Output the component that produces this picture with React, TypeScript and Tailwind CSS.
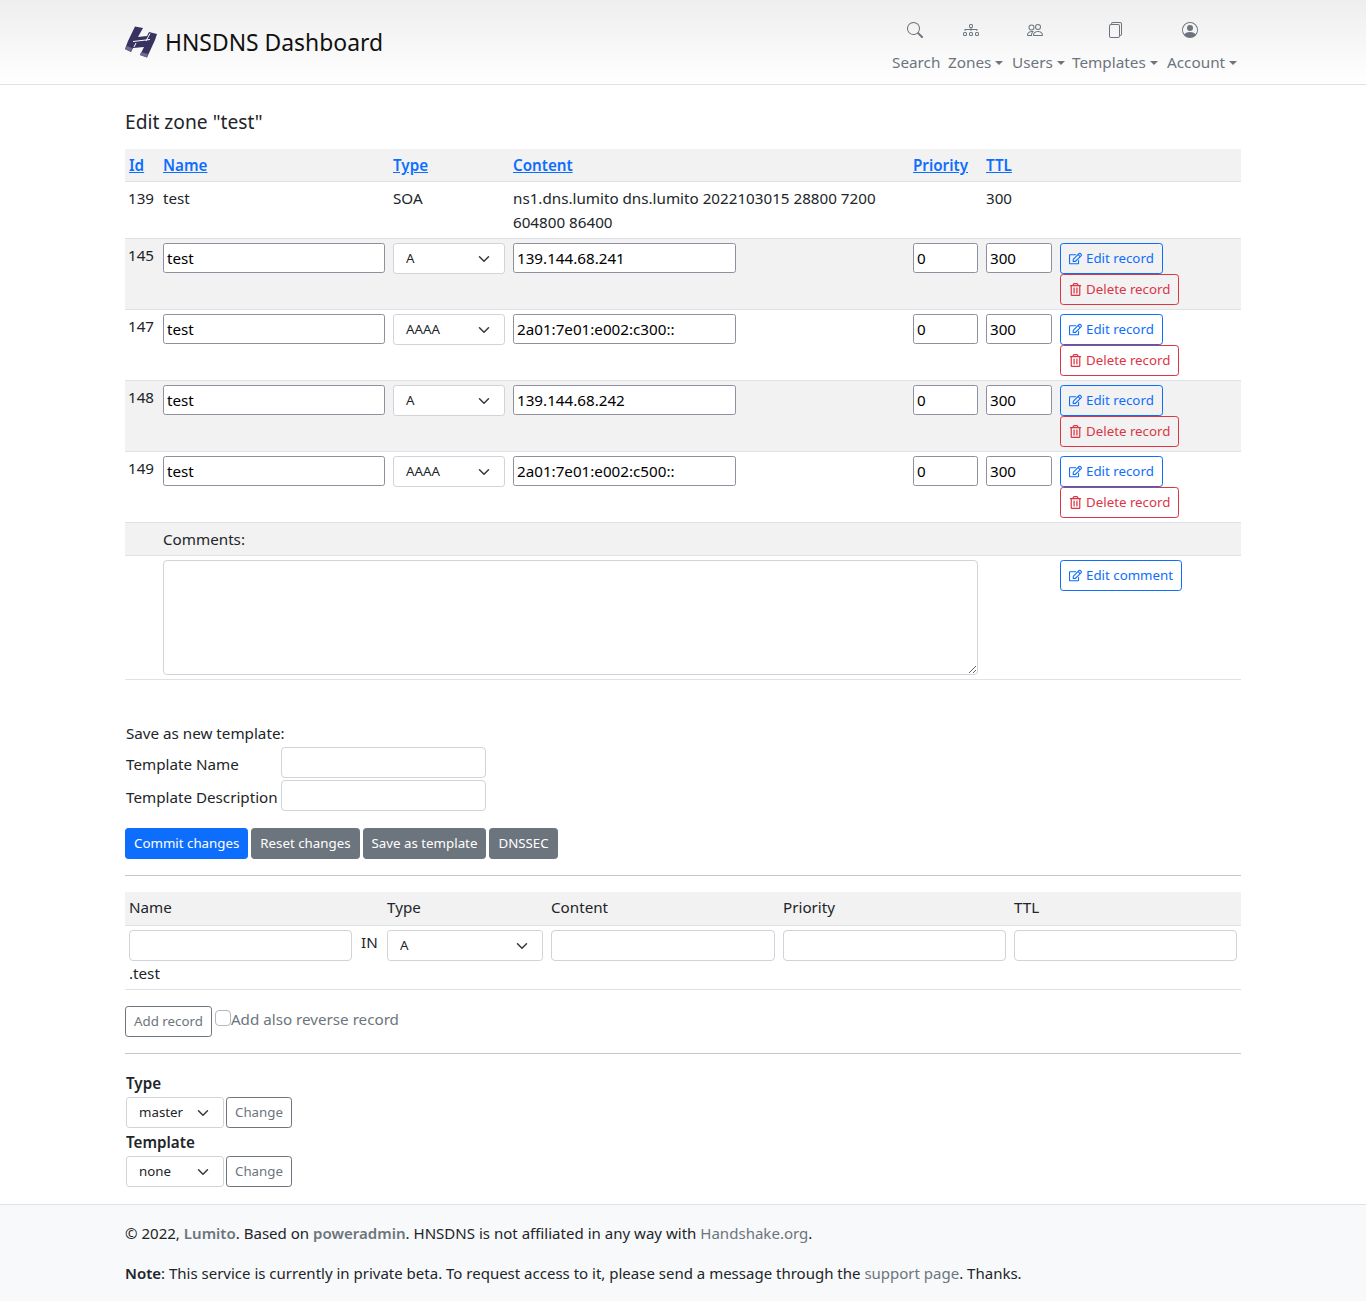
import React from "react";
import { BsSearch, BsDiagram3, BsPeople, BsFiles, BsPersonCircle } from "react-icons/bs";
import { FaRegEdit, FaRegTrashAlt } from "react-icons/fa";

function Logo() {
  return (
    <svg width="33" height="32" viewBox="0 0 33 32" className="shrink-0">
      <path d="M10 0.5 L18 2 L13 11 L22 10 L24 6 L32 8 L30 14 L22 31.5 L15 29 L19 21 L8 22 L6 26 L0 23 L3 15 Z" fill="#37325f" />
      <path d="M8 15.5 L25 13.5 M25 7.5 L21 15 M11 17 L9 21" stroke="#ffffff" strokeWidth="1" fill="none" />
      <path d="M0 23 L6 26 L7 22 L2 20 Z" fill="#6f6b8f" />
      <path d="M15 29 L22 31.5 L23 28 L16 26 Z" fill="#6f6b8f" />
    </svg>
  );
}

function Caret() {
  return <span className="ml-[4px] inline-block align-[3px] border-t-[4.8px] border-x-[4.8px] border-b-0 border-t-[#6c757d] border-x-transparent" />;
}

function NavItem({ icon, label, caret, w, iconClass }: { icon: React.ReactNode; label: string; caret?: boolean; w: string; iconClass: string }) {
  return (
    <div className={"flex flex-col items-start " + w}>
      <div className={"h-[16px] flex items-center text-[#6c757d] " + iconClass}>{icon}</div>
      <div className="mt-[12px] text-[#6c757d] text-[15.3px] leading-6 whitespace-nowrap">
        {label}
        {caret && <Caret />}
      </div>
    </div>
  );
}

function Select({ value, options, w }: { value: string; options: string[]; w: string }) {
  return (
    <div className={"relative " + w}>
      <select
        defaultValue={value}
        className="appearance-none block w-full h-[31px] pl-[12px] pr-[36px] text-[13.3px] leading-[21px] text-[#212529] bg-white border border-[#ced4da] rounded-[3.2px]"
      >
        {options.map((o) => (
          <option key={o}>{o}</option>
        ))}
      </select>
      <svg width="16" height="12" viewBox="0 0 16 16" className="absolute right-[13px] top-[10px] pointer-events-none">
        <path d="M2 5l6 6 6-6" fill="none" stroke="#343a40" strokeWidth="2" strokeLinecap="round" strokeLinejoin="round" />
      </svg>
    </div>
  );
}

function TextInput({ value, w }: { value: string; w: string }) {
  return (
    <input
      defaultValue={value}
      className={"block h-[30px] px-[3px] text-[15.2px] text-black bg-white border border-[#8f8f9d] rounded-[2.5px] " + w}
    />
  );
}

function Btn({ kind, icon, children }: { kind: "edit" | "del" | "grey" | "solid" | "outline"; icon?: React.ReactNode; children: React.ReactNode }) {
  const c = {
    edit: "text-[#0d6efd] border-[#0d6efd]",
    del: "text-[#dc3545] border-[#dc3545]",
    grey: "text-white bg-[#6c757d] border-[#6c757d]",
    solid: "text-white bg-[#0d6efd] border-[#0d6efd]",
    outline: "text-[#6c757d] border-[#6c757d]",
  }[kind];
  return (
    <button className={"flex items-center h-[31px] px-[8px] text-[13.3px] leading-[21px] border rounded-[3.2px] whitespace-nowrap " + c}>
      {icon && <span className="mr-[4px] flex items-center">{icon}</span>}
      {children}
    </button>
  );
}

const records = [
  { id: "145", type: "A", content: "139.144.68.241", alt: true },
  { id: "147", type: "AAAA", content: "2a01:7e01:e002:c300::", alt: false },
  { id: "148", type: "A", content: "139.144.68.242", alt: true },
  { id: "149", type: "AAAA", content: "2a01:7e01:e002:c500::", alt: false },
];

const typeOptions = ["A", "AAAA", "CNAME", "MX", "NS", "SOA", "TXT"];

function Th({ children }: { children: React.ReactNode }) {
  return (
    <th className="p-[4px] h-[32px] text-left font-semibold">
      <a className="text-[#0d6efd] underline">{children}</a>
    </th>
  );
}

export default function App() {
  return (
    <div className="bg-white text-[#212529] text-[15.2px] leading-6 font-['Noto_Sans','Liberation_Sans',sans-serif]">
      <header className="h-[85px] border-b border-[#dee2e6] bg-gradient-to-b from-[#eeeeee] to-[#ffffff]">
        <div className="w-[1116px] mx-auto flex justify-between h-full">
          <div className="flex items-center gap-[7px]">
            <Logo />
            <span className="text-[22.9px] leading-9 pt-[2px] text-[#111] whitespace-nowrap">HNSDNS Dashboard</span>
          </div>
          <nav className="flex pt-[22px] pr-[4px] gap-[8px]">
            <NavItem w="w-[48px]" iconClass="ml-[15px]" icon={<BsSearch size={16} />} label="Search" />
            <NavItem w="w-[56px]" iconClass="ml-[15px]" icon={<BsDiagram3 size={16} />} label="Zones" caret />
            <NavItem w="w-[52px]" iconClass="ml-[15px]" icon={<BsPeople size={16} />} label="Users" caret />
            <NavItem w="w-[87px]" iconClass="ml-[35px]" icon={<BsFiles size={16} />} label="Templates" caret />
            <NavItem w="w-[70px]" iconClass="ml-[15px]" icon={<BsPersonCircle size={16} />} label="Account" caret />
          </nav>
        </div>
      </header>

      <main className="w-[1116px] mx-auto">
        <h1 className="pt-[25px] pb-[15px] text-[19.2px] leading-[24px] font-normal">Edit zone "test"</h1>

        <table className="w-full table-fixed border-collapse">
          <colgroup>
            <col className="w-[34px]" />
            <col className="w-[230px]" />
            <col className="w-[120px]" />
            <col className="w-[400px]" />
            <col className="w-[73px]" />
            <col className="w-[74px]" />
            <col />
          </colgroup>
          <thead>
            <tr className="bg-[#f2f2f2] border-b border-[#dee2e6]">
              <Th>Id</Th>
              <Th>Name</Th>
              <Th>Type</Th>
              <Th>Content</Th>
              <Th>Priority</Th>
              <Th>TTL</Th>
              <th />
            </tr>
          </thead>
          <tbody>
            <tr className="border-b border-[#dee2e6] align-top">
              <td className="p-[4px] pl-[3px]">139</td>
              <td className="p-[4px]">test</td>
              <td className="p-[4px]">SOA</td>
              <td className="p-[4px]">ns1.dns.lumito dns.lumito 2022103015 28800 7200 604800 86400</td>
              <td className="p-[4px]" />
              <td className="p-[4px]">300</td>
              <td />
            </tr>
            {records.map((r) => (
              <tr key={r.id} className={"border-b border-[#dee2e6] align-top " + (r.alt ? "bg-[#f2f2f2]" : "")}>
                <td className="p-[4px] pl-[3px]">{r.id}</td>
                <td className="p-[4px]">
                  <TextInput value="test" w="w-[222px]" />
                </td>
                <td className="p-[4px]">
                  <Select value={r.type} options={typeOptions} w="w-[112px]" />
                </td>
                <td className="p-[4px]">
                  <TextInput value={r.content} w="w-[223px]" />
                </td>
                <td className="p-[4px]">
                  <TextInput value="0" w="w-[65px]" />
                </td>
                <td className="p-[4px]">
                  <TextInput value="300" w="w-[66px]" />
                </td>
                <td className="p-[4px]">
                  <div className="flex flex-col items-start">
                    <Btn kind="edit" icon={<FaRegEdit size={13} />}>Edit record</Btn>
                    <Btn kind="del" icon={<FaRegTrashAlt size={13} />}>Delete record</Btn>
                  </div>
                </td>
              </tr>
            ))}
            <tr className="bg-[#f2f2f2] border-b border-[#dee2e6]">
              <td />
              <td colSpan={6} className="p-[4px]">Comments:</td>
            </tr>
            <tr className="border-b border-[#dee2e6] align-top">
              <td />
              <td colSpan={4} className="p-[4px]">
                <textarea className="block w-full h-[115px] border border-[#ced4da] rounded-[4px] bg-white" />
              </td>
              <td />
              <td className="p-[4px]">
                <div className="flex">
                  <Btn kind="edit" icon={<FaRegEdit size={13} />}>Edit comment</Btn>
                </div>
              </td>
            </tr>
          </tbody>
        </table>

        <div className="pt-[41px] pl-[1px]">
          <div className="h-[24px]">Save as new template:</div>
          <div className="grid grid-cols-[155px_205px] gap-y-[2px] mt-[2px] items-center">
            <span className="whitespace-nowrap pt-[2px]">Template Name</span>
            <input className="block h-[31px] w-[205px] bg-white border border-[#ced4da] rounded-[4px]" />
            <span className="whitespace-nowrap pt-[2px]">Template Description</span>
            <input className="block h-[31px] w-[205px] bg-white border border-[#ced4da] rounded-[4px]" />
          </div>
        </div>

        <div className="flex gap-[3px] mt-[17px]">
          <Btn kind="solid">Commit changes</Btn>
          <Btn kind="grey">Reset changes</Btn>
          <Btn kind="grey">Save as template</Btn>
          <Btn kind="grey">DNSSEC</Btn>
        </div>

        <hr className="mt-[16px] border-0 border-t border-[#c6c7c8]" />

        <table className="w-full table-fixed border-collapse mt-[16px]">
          <colgroup>
            <col className="w-[231px]" />
            <col className="w-[27px]" />
            <col className="w-[164px]" />
            <col className="w-[232px]" />
            <col className="w-[231px]" />
            <col />
          </colgroup>
          <thead>
            <tr className="bg-[#f2f2f2] border-b border-[#dee2e6]">
              <th className="px-[4px] pt-[3px] pb-[5px] h-[33px] text-left font-normal">Name</th>
              <th />
              <th className="px-[4px] pt-[3px] pb-[5px] text-left font-normal">Type</th>
              <th className="px-[4px] pt-[3px] pb-[5px] text-left font-normal">Content</th>
              <th className="px-[4px] pt-[3px] pb-[5px] text-left font-normal">Priority</th>
              <th className="px-[4px] pt-[3px] pb-[5px] text-left font-normal">TTL</th>
            </tr>
          </thead>
          <tbody>
            <tr className="border-b border-[#dee2e6] align-top">
              <td className="p-[4px]">
                <input className="block h-[31px] w-[223px] bg-white border border-[#ced4da] rounded-[4px]" />
                .test
              </td>
              <td className="py-[4px] pl-[5px]">IN</td>
              <td className="p-[4px]">
                <Select value="A" options={typeOptions} w="w-[156px]" />
              </td>
              <td className="p-[4px]">
                <input className="block h-[31px] w-full bg-white border border-[#ced4da] rounded-[4px]" />
              </td>
              <td className="p-[4px]">
                <input className="block h-[31px] w-full bg-white border border-[#ced4da] rounded-[4px]" />
              </td>
              <td className="p-[4px]">
                <input className="block h-[31px] w-full bg-white border border-[#ced4da] rounded-[4px]" />
              </td>
            </tr>
          </tbody>
        </table>

        <div className="flex items-start mt-[16px] gap-[3px]">
          <Btn kind="outline">Add record</Btn>
          <label className="flex items-start text-[#6c757d] mt-px">
            <input type="checkbox" className="appearance-none block w-[16px] h-[16px] mt-[3px] bg-white border border-[#b5b8bb] rounded-[4px]" />
            Add also reverse record
          </label>
        </div>

        <hr className="mt-[16px] border-0 border-t border-[#c6c7c8]" />

        <div className="pt-[17px] pl-[1px] pb-[17px]">
          <div className="font-semibold h-[26px]">Type</div>
          <div className="flex gap-[2px]">
            <Select value="master" options={["master", "native", "slave"]} w="w-[98px]" />
            <Btn kind="outline">Change</Btn>
          </div>
          <div className="font-semibold mt-[2px] h-[26px]">Template</div>
          <div className="flex gap-[2px]">
            <Select value="none" options={["none"]} w="w-[98px]" />
            <Btn kind="outline">Change</Btn>
          </div>
        </div>
      </main>

      <footer className="h-[98px] bg-[#f8f9fa] border-t border-b border-[#dee2e6] text-[15px]">
        <div className="w-[1116px] mx-auto pt-[16px]">
          <p className="text-[15.06px]">
            © 2022, <a className="font-semibold text-[#6c757d]">Lumito</a>. Based on{" "}
            <a className="font-semibold text-[#6c757d]">poweradmin</a>. HNSDNS is not affiliated in any way with{" "}
            <a className="text-[#6c757d]">Handshake.org</a>.
          </p>
          <p className="mt-[16px]">
            <strong className="font-semibold">Note</strong>: This service is currently in private beta. To request access to it, please send a message through the{" "}
            <a className="text-[#6c757d]">support page</a>. Thanks.
          </p>
        </div>
      </footer>
    </div>
  );
}
